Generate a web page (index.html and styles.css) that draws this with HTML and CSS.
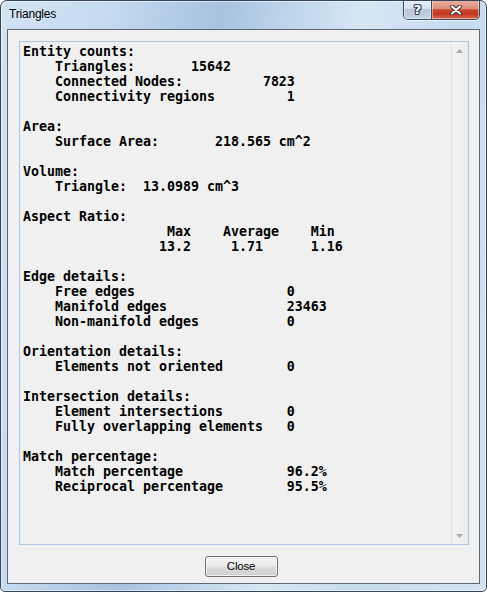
FILE: index.html
```html
<!DOCTYPE html>
<html>
<head>
<meta charset="utf-8">
<title>Triangles</title>
<link rel="stylesheet" href="styles.css">
</head>
<body>
<div class="window">
  <div class="titlebar">
    <span class="title">Triangles</span>
    <div class="caption-buttons">
      <div class="cbtn help"><span class="help-glyph">?</span></div>
      <div class="cbtn close">
        <svg width="12" height="10" viewBox="0 0 12 10">
          <path d="M2 1.5 L10 8.5 M10 1.5 L2 8.5" stroke="#3a2b2b" stroke-width="4" stroke-linecap="round" fill="none"/>
          <path d="M2 1.5 L10 8.5 M10 1.5 L2 8.5" stroke="#ffffff" stroke-width="2.2" stroke-linecap="round" fill="none"/>
        </svg>
      </div>
    </div>
  </div>
  <div class="client">
    <div class="textbox">
<pre class="report">Entity counts:
    Triangles:       15642
    Connected Nodes:          7823
    Connectivity regions         1

Area:
    Surface Area:       218.565 cm^2

Volume:
    Triangle:  13.0989 cm^3

Aspect Ratio:
                  Max    Average    Min
                 13.2     1.71      1.16

Edge details:
    Free edges                   0
    Manifold edges               23463
    Non-manifold edges           0

Orientation details:
    Elements not oriented        0

Intersection details:
    Element intersections        0
    Fully overlapping elements   0

Match percentage:
    Match percentage             96.2%
    Reciprocal percentage        95.5%</pre>
      <div class="scrollbar">
        <div class="sb-arrow">
          <svg width="7" height="4" viewBox="0 0 7 4"><polygon points="3.5,0 7,4 0,4" fill="#a8a8a8"/></svg>
        </div>
        <div class="sb-track"></div>
        <div class="sb-arrow">
          <svg width="7" height="4" viewBox="0 0 7 4"><polygon points="0,0 7,0 3.5,4" fill="#a8a8a8"/></svg>
        </div>
      </div>
    </div>
    <div class="footer">
      <button class="btn">Close</button>
    </div>
  </div>
</div>
</body>
</html>
```
FILE: styles.css
```css
html, body {
  margin: 0;
  padding: 0;
  background: #ffffff;
}

.window {
  box-sizing: border-box;
  width: 487px;
  height: 592px;
  border: 1px solid #34445a;
  border-radius: 7px 7px 5px 5px;
  background:
    linear-gradient(100deg,
      #d3e3f3 0%, #c6dbf0 18%, #b2cbe6 30%, #a8c3e0 38%,
      #bcd3ea 48%, #d6e6f4 62%, #c7dbef 78%, #d2e3f3 100%);
  box-shadow: inset 0 0 0 1px rgba(255, 255, 255, 0.55);
  padding: 0 6px 7px 6px;
  display: flex;
  flex-direction: column;
  overflow: hidden;
}

.titlebar {
  height: 28px;
  display: flex;
  align-items: flex-start;
  justify-content: space-between;
}

.title {
  font-family: "Liberation Sans", Arial, sans-serif;
  font-size: 12px;
  letter-spacing: -0.2px;
  line-height: 14px;
  color: #000;
  margin: 6px 0 0 2px;
}

.caption-buttons {
  display: flex;
  margin-top: -1px;
  border: 1px solid #3a4a60;
  border-top: none;
  border-radius: 0 0 5px 5px;
  overflow: hidden;
  box-shadow: 0 1px 0 rgba(255, 255, 255, 0.6);
}

.cbtn {
  height: 19px;
  display: flex;
  align-items: center;
  justify-content: center;
  box-shadow: inset 0 0 0 1px rgba(255, 255, 255, 0.45);
}

.help {
  width: 27px;
  border-right: 1px solid #3a4a60;
  background: linear-gradient(#e7eef6 0%, #d6e1ed 45%, #b9c8d9 50%, #c4d2e1 100%);
}

.help-glyph {
  font-family: "DejaVu Sans", sans-serif;
  font-weight: bold;
  font-size: 13px;
  line-height: 13px;
  color: #fff;
  text-shadow:
    1px 0 0 #33465e, -1px 0 0 #33465e, 0 1px 0 #33465e, 0 -1px 0 #33465e,
    1px 1px 0 #33465e, -1px -1px 0 #33465e, 1px -1px 0 #33465e, -1px 1px 0 #33465e;
}

.close {
  width: 47px;
  background: linear-gradient(#eab2a5 0%, #df8d79 45%, #c8442c 52%, #c13a22 75%, #db6a4f 100%);
}

.client {
  flex: 1;
  border: 1px solid #5a6775;
  background: #f0f0f0;
  padding: 11px 10px 6px 11px;
  display: flex;
  flex-direction: column;
}

.textbox {
  height: 502px;
  border: 1px solid #a7c8e6;
  display: flex;
  background: #f0f0f0;
}

.report {
  flex: 1;
  margin: 0;
  padding: 2px 0 0 3px;
  font-family: "DejaVu Sans Mono", monospace;
  font-weight: bold;
  font-size: 13.29px;
  line-height: 15px;
  color: #000;
  overflow: hidden;
}

.scrollbar {
  width: 17px;
  display: flex;
  flex-direction: column;
  background: linear-gradient(to right, #e2e2e2 0, #e2e2e2 1px, #f3f3f3 1px, #f0f0f0 9px, #eaeaea 100%);
}

.sb-arrow {
  height: 17px;
  display: flex;
  align-items: center;
  justify-content: center;
}

.sb-track {
  flex: 1;
}

.footer {
  margin-top: 11px;
  display: flex;
  justify-content: center;
}

.btn {
  width: 73px;
  height: 21px;
  margin-right: 6px;
  padding: 0;
  border: 1px solid #707070;
  border-radius: 3px;
  background: linear-gradient(#f2f2f2 0%, #ebebeb 48%, #dddddd 52%, #cfcfcf 100%);
  box-shadow: inset 0 0 0 1px rgba(255, 255, 255, 0.7);
  font-family: "Liberation Sans", Arial, sans-serif;
  font-size: 11.5px;
  letter-spacing: -0.2px;
  color: #000;
  line-height: 17px;
}
```
